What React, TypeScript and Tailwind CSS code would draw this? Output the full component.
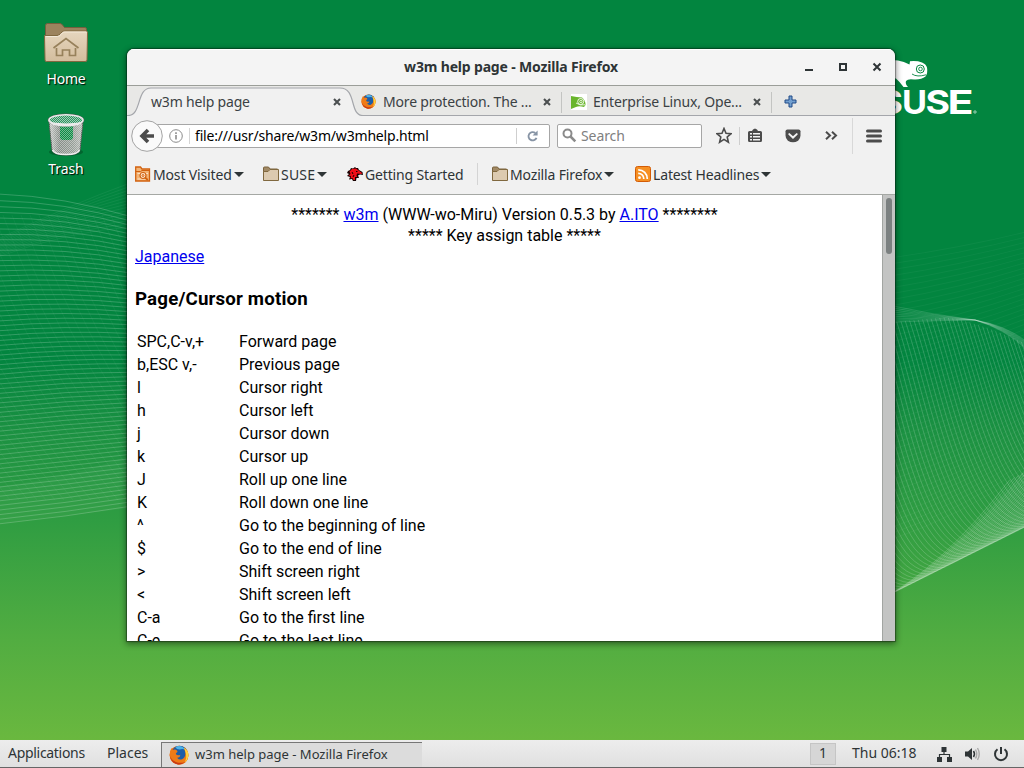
import React from "react";

const ui = "font-['Noto_Sans',sans-serif]";

const keys: [string, string][] = [
  ["SPC,C-v,+", "Forward page"],
  ["b,ESC v,-", "Previous page"],
  ["l", "Cursor right"],
  ["h", "Cursor left"],
  ["j", "Cursor down"],
  ["k", "Cursor up"],
  ["J", "Roll up one line"],
  ["K", "Roll down one line"],
  ["^", "Go to the beginning of line"],
  ["$", "Go to the end of line"],
  [">", "Shift screen right"],
  ["<", "Shift screen left"],
  ["C-a", "Go to the first line"],
  ["C-e", "Go to the last line"],
];

function Wallpaper() {
  const left = Array.from({ length: 68 }, (_, i) => {
    const t = i / 67;
    const y0 = 194 + 330 * Math.pow(t, 0.93);
    const y1 = 217 + 289 * t;
    const cy = (y0 + y1) / 2 - 9 * (1 - t) + 2 * t;
    return `M-2 ${y0.toFixed(1)}Q65 ${cy.toFixed(1)} 132 ${y1.toFixed(1)}`;
  });
  const cross = Array.from({ length: 30 }, (_, i) => `M${-150 + i * 9} 215Q${-90 + i * 9} 380 ${10 + i * 9} 500`);
  const fan = Array.from({ length: 14 }, (_, i) => `M0 ${238 + i * 1.4}Q70 ${205 + i * 2} 130 ${183 + i * 3.4}`);
  const faint = Array.from({ length: 48 }, (_, i) => `M890 ${258 + i * 6}Q960 ${248 + i * 5.7} 1026 ${232 + i * 5.1}`);
  const mesh = Array.from({ length: 64 }, (_, i) => {
    const sx = 772 + i * 4.3;
    const sy = sx < 945 ? 322 - (sx - 895) * 0.09 : 317.5 + Math.pow((sx - 945) / 80, 1.4) * 26;
    const bx = sx + 108;
    const by = 592 - (bx - 895) * 0.5;
    return `M${sx.toFixed(1)} ${sy.toFixed(1)}C${(sx + 28).toFixed(1)} ${(sy + 85).toFixed(1)} ${(bx - 60).toFixed(1)} ${(by + 8).toFixed(1)} ${bx.toFixed(1)} ${by.toFixed(1)}Q${(bx + 60).toFixed(1)} ${(by - 30).toFixed(1)} ${(bx + 130).toFixed(1)} ${(by - 120).toFixed(1)}`;
  });
  const ribbon = Array.from({ length: 9 }, (_, i) => `M893 ${306 + i * 2}Q935 ${315 + i * 0.7} 975 ${320}Q1005 ${325 + i * 0.5} 1026 ${341 + i}`);
  return (
    <svg className="absolute inset-0" width="1024" height="768" fill="none" stroke="#fff">
      <g strokeWidth="0.9" strokeOpacity="0.22">{left.map((d) => <path key={d} d={d} />)}</g>
      <g strokeWidth="0.6" strokeOpacity="0.07">{cross.map((d) => <path key={d} d={d} />)}</g>
      <g strokeWidth="0.8" strokeOpacity="0.07">{fan.map((d) => <path key={d} d={d} />)}</g>
      <path d="M0 486Q70 478 130 455V508L0 524Z" fill="#fff" fillOpacity="0.03" stroke="none" />
      <g strokeWidth="0.7" strokeOpacity="0.06">{faint.map((d) => <path key={d} d={d} />)}</g>
      <g strokeWidth="0.8" strokeOpacity="0.22">{mesh.map((d) => <path key={d} d={d} />)}</g>
      <path d="M1026 468Q970 540 895 592L1026 527Z" fill="#fff" fillOpacity="0.06" stroke="none" />
      <g strokeWidth="0.7" strokeOpacity="0.18">{ribbon.map((d) => <path key={d} d={d} />)}</g>
    </svg>
  );
}

function SuseLogo() {
  return (
    <svg className="absolute left-[870px] top-[54px]" width="112" height="66" viewBox="870 54 112 66">
      <path
        fill="#fff"
        d="M870 66Q886 58 898 60.500Q904 61.500 909.500 64.500L910 61.200Q917 60.500 922 62.500Q926 64 927 67.500Q928 73 925.500 76.500Q921 80 914 79.500Q908 78.500 906 81Q905 84 908 87H903.500Q899 81 895.500 78L893 86H870Z"
      />
      <circle cx="920.300" cy="69" r="4" fill="none" stroke="#04853f" />
      <circle cx="920.500" cy="69" r="1.800" fill="none" stroke="#04853f" strokeWidth="0.900" />
      <path d="M912 74Q917 77.500 926 74.800" fill="none" stroke="#04853f" strokeWidth="0.900" />
      <g fill="#fff" className="font-[Inter,sans-serif] text-[33px] font-bold">
        <text x="878" y="114" textLength="25" lengthAdjust="spacingAndGlyphs">S</text>
        <text x="902" y="114" textLength="25" lengthAdjust="spacingAndGlyphs">U</text>
        <text x="925.500" y="114" textLength="24.500" lengthAdjust="spacingAndGlyphs">S</text>
        <text x="947.500" y="114" textLength="26" lengthAdjust="spacingAndGlyphs">E</text>
      </g>
      <circle cx="975" cy="112" r="1.200" fill="none" stroke="#fff" strokeWidth="0.600" />
    </svg>
  );
}

function HomeIcon() {
  return (
    <svg width="46" height="42" viewBox="0 0 46 42">
      <defs>
        <linearGradient id="hf" x2="0" y2="1">
          <stop stopColor="#e6d6be" />
          <stop offset="1" stopColor="#d3bd9d" />
        </linearGradient>
      </defs>
      <path d="M2.500 39V3.500Q2.500 1.500 4.500 1.500H17Q18.500 1.500 19.500 3L21.500 5.500H42Q43.500 5.500 43.500 7V39Z" fill="#9c835e" stroke="#755f3e" />
      <path d="M1.500 13.500H14Q16 13.500 17.500 11.500L19 10Q20 9 22 9H43Q44.500 9 44.500 10.500L44 38Q44 39.500 42 39.500H3.500Q2 39.500 2 38Z" fill="url(#hf)" stroke="#80683f" />
      <path d="M2.800 14.500H14.500Q17 14.200 18.500 12L20.500 10H43.500" fill="none" stroke="#f3e9d9" />
      <path d="M10.500 26L23 16.500L35.500 26M13.500 26V33.500H19.500V28H26.500V33.500H32.500V26" fill="none" stroke="#97815b" strokeWidth="1.700" />
    </svg>
  );
}

function TrashIcon() {
  return (
    <svg width="40" height="46" viewBox="0 0 40 46">
      <defs>
        <linearGradient id="tb">
          <stop stopColor="#c9cbc8" />
          <stop offset="0.300" stopColor="#858c86" />
          <stop offset="0.700" stopColor="#949c95" />
          <stop offset="1" stopColor="#b9bcb8" />
        </linearGradient>
        <pattern id="tm" width="2" height="2" patternUnits="userSpaceOnUse">
          <rect width="1" height="1" fill="#fff" fillOpacity="0.550" />
          <rect x="1" y="1" width="1" height="1" fill="#fff" fillOpacity="0.550" />
        </pattern>
      </defs>
      <ellipse cx="20" cy="40" rx="17" ry="4" fill="#023d1c" fillOpacity="0.450" />
      <path d="M3 9L6 38Q7 43 20 43T34 38L37 9Z" fill="url(#tb)" stroke="#5b5e5b" />
      <path d="M14 12H27V25Q27 28 24 28H17Q14 28 14 25Z" fill="#0d8a45" />
      <path d="M3 9L6 38Q7 43 20 43T34 38L37 9Z" fill="url(#tm)" fillOpacity="0.750" />
      <ellipse cx="20" cy="8" rx="18" ry="6" fill="#2d9460" stroke="#555" strokeWidth="1" />
      <ellipse cx="20" cy="8" rx="17" ry="5.500" fill="url(#tm)" />
      <path d="M2 8Q4 14.500 20 14.500T38 8Q37 11 20 11.500Q4 11 2 8Z" fill="#eee" />
      <ellipse cx="20" cy="8" rx="17" ry="5.300" fill="none" stroke="#e9e9e9" strokeWidth="1.600" />
      <path d="M6.500 38Q8 42.500 20 42.500T33.500 38" fill="none" stroke="#eee" strokeWidth="1.500" />
    </svg>
  );
}

function Firefox({ size }: { size: number }) {
  return (
    <svg width={size} height={size} viewBox="0 0 16 16" className="shrink-0">
      <circle cx="8" cy="8" r="7.500" fill="#e66000" />
      <circle cx="8.500" cy="6.600" r="6.100" fill="#1c5da8" />
      <path d="M5 1.500Q10-.5 13.500 4Q11 2.500 8.500 3.500Q6 3.500 5 1.500Z" fill="#4cb3e8" />
      <path d="M12 2Q16 5 15.500 9Q14.500 15.500 8 15.700Q1 15 .5 8Q.5 4.500 2 2.300L3 4Q5 3 6.500 4.500Q7.500 5.500 5.500 6.500Q5.300 8 6.500 8Q8 8.500 9 7.800Q9 10 6.500 10.200Q8 12.300 10.500 11.400Q13.500 9.500 13 6Z" fill="#ef7b17" />
      <path d="M12 2Q16 5 15.500 9Q15 12 12.500 14Q14.500 10 13.300 6Z" fill="#ffd23b" />
      <path d="M.6 8Q1.500 12 5.500 13.500Q9 15 13 13.500Q10 16 7 15.600Q1.500 14.500.6 8Z" fill="#c83a16" />
    </svg>
  );
}

function Folder() {
  return (
    <svg width="16" height="16" viewBox="0 0 16 16" className="shrink-0">
      <path d="M.5 14V2Q.5 1 1.500 1H5.500L7 3H14.500V14Z" fill="#a28a66" stroke="#7a623d" />
      <path d="M.5 5.500H5L7 3.500H15.500V14.500H.5Z" fill="#dccab0" stroke="#80683f" />
    </svg>
  );
}

function MostVisited() {
  return (
    <svg width="16" height="16" viewBox="0 0 16 16" className="shrink-0" fill="none" stroke="#d2620f">
      <path d="M.7 14.500V1H5.500L7 3H14.500V15H.7Z" fill="#f3b577" strokeWidth="1.300" />
      <path d="M.7 5.500H5.500L7 4.500H14.500" />
      <path d="M2.500 7.500H13M2.500 13H12" stroke="#fbe0c4" />
      <circle cx="8" cy="9.500" r="3" fill="#fde9d5" strokeWidth="1.200" />
      <circle cx="8" cy="9.500" r="1" />
      <path d="M10 11.500L12.800 14" strokeWidth="1.700" />
    </svg>
  );
}

function RedHead() {
  return (
    <svg width="17" height="15" viewBox="0 0 17 15" className="shrink-0">
      <path d="M1 4L3 3L4 1L6 1.500L8 0L9 1L11 1L12 3L15.500 5L16 8L13 7.500L11 8.500L12 11L9.500 11L9 14L6 14L5 12L2 12.500L3 10L0 9L2 7L0 6Z" fill="#180000" />
      <path d="M2.500 4.500L5 2L9 1.500L11 3L15 6L14.500 7L10 6.500L9.500 9L10.500 10L8 10L8 13L6.500 13L5.500 11L3.500 11.500L4 9L1.500 8.500L3.500 7Z" fill="#f00d16" />
      <path d="M9 4.500H10.500M5 5L6 7M7 8L6 10" stroke="#180000" />
    </svg>
  );
}

function Rss() {
  return (
    <svg width="16" height="16" viewBox="0 0 16 16" className="shrink-0">
      <rect x=".5" y=".5" width="15" height="15" rx="2" fill="#f69023" stroke="#d35c06" />
      <circle cx="4.500" cy="11.700" r="1.400" fill="#fff" />
      <path d="M3.200 7.300A5.500 5.500 0 0 1 8.800 13M3.200 3.800A9 9 0 0 1 12.300 13" fill="none" stroke="#fff" strokeWidth="1.700" />
    </svg>
  );
}

function SuseFavicon() {
  return (
    <svg width="16" height="16" viewBox="0 0 16 16" className="shrink-0">
      <path d="M0 0H16V16H0Z" fill="#fff" />
      <path d="M0 2Q6 3 11 3.500Q14.500 6 14.500 11L13 13Q8 11.500 5 13L0 15Z" fill="#69b52c" />
      <circle cx="9.700" cy="7.500" r="3" fill="none" stroke="#fff" strokeWidth=".9" />
      <circle cx="9.900" cy="7.500" r="1.200" fill="none" stroke="#fff" strokeWidth=".8" />
      <path d="M5 9Q9 12 14 10.800" fill="none" stroke="#fff" strokeWidth=".8" />
    </svg>
  );
}

function CloseX() {
  return (
    <svg width="8" height="8" viewBox="0 0 8 8" className="shrink-0">
      <path d="M1 1L7 7M7 1L1 7" stroke="#4b4f50" strokeWidth="2.100" />
    </svg>
  );
}

function Caret() {
  return (
    <svg width="10" height="5" viewBox="0 0 10 5" className="shrink-0">
      <path d="M0 0H10L5 5Z" fill="#2e3436" />
    </svg>
  );
}

function TitleBar() {
  return (
    <div className="relative flex h-[36px] items-center justify-center border-t border-white bg-[#f4f4f4] pb-[2px] text-[14px] font-bold text-[#2e3436]">
      <span className="whitespace-nowrap tracking-[-0.17px]">w3m help page - Mozilla Firefox</span>
      <svg className="absolute right-[12px] top-[11px]" width="80" height="12" viewBox="0 0 80 12" fill="none" stroke="#2e3436">
        <path d="M2 9H10" strokeWidth="2" />
        <rect x="37" y="3" width="6" height="6" strokeWidth="2" />
        <path d="M70.500 2.500L77.500 9.500M77.500 2.500L70.500 9.500" strokeWidth="2" />
      </svg>
    </div>
  );
}

function TabBar() {
  return (
    <div className="relative h-[31px] border-t border-[#9b9e99] bg-[#e8e8e6]">
      <svg className="absolute left-0 top-0" width="768" height="30" viewBox="0 0 768 30">
        <path d="M0 29.500H1C15 29.500 9 2 24 2H213C230 2 222 29.500 236 29.500H768V31H0Z" fill="#f1f1f1" />
        <path d="M0 29.500H1C15 29.500 9 2 24 2H213C230 2 222 29.500 236 29.500H768" fill="none" stroke="#a4a6ab" strokeWidth="1.200" />
        <path d="M434.500 6V27M644.500 6V27" stroke="#c3c4c2" />
      </svg>
      <div className="relative flex h-[31px] items-center text-[14px] tracking-[-0.18px] text-[#3b4144]">
        <span className="ml-[24px] w-[182px] whitespace-nowrap">w3m help page</span>
        <CloseX />
        <span className="ml-[20px] flex"><Firefox size={15} /></span>
        <span className="ml-[7px] w-[160px] whitespace-nowrap">More protection. The ...</span>
        <CloseX />
        <span className="ml-[20px] flex"><SuseFavicon /></span>
        <span className="ml-[6px] w-[160px] whitespace-nowrap">Enterprise Linux, Ope...</span>
        <CloseX />
        <svg className="ml-[23px]" width="13" height="13" viewBox="0 0 13 13">
          <path d="M5 1H8V5H12V8H8V12H5V8H1V5H5Z" fill="#729fcf" stroke="#204a87" />
        </svg>
      </div>
    </div>
  );
}

function NavBar() {
  return (
    <div className="flex h-[39px] items-center text-[14px]">
      <svg className="relative z-10 ml-[4px] shrink-0" width="32" height="32" viewBox="0 0 32 32">
        <circle cx="16" cy="16" r="15.300" fill="#fafafa" stroke="#a3a3a3" />
        <path d="M17 10L11 16L17 22M11 16H23" fill="none" stroke="#4c4c4c" strokeWidth="3.600" />
      </svg>
      <div className="-ml-[6px] flex h-[24px] w-[393px] shrink-0 items-center rounded-r-[2px] border border-[#a6a6a6] bg-white">
        <svg className="ml-[11px] shrink-0" width="14" height="14" viewBox="0 0 14 14" fill="none" stroke="#8b8b8b">
          <circle cx="7" cy="7" r="6.300" />
          <path d="M7 6V10.500M7 3.300V5" strokeWidth="1.600" />
        </svg>
        <span className="ml-[6px] h-[16px] w-px bg-[#d5d5d5]" />
        <span className="ml-[5px] w-[321px] whitespace-nowrap tracking-[-0.18px] text-black">file:///usr/share/w3m/w3mhelp.html</span>
        <span className="h-[16px] w-px bg-[#cfcfcf]" />
        <svg className="ml-[10px] shrink-0" width="12" height="12" viewBox="0 0 13 13">
          <path d="M9 3.300A4.500 4.500 0 1 0 10.300 8.500" fill="none" stroke="#8794a5" strokeWidth="2" />
          <path d="M11.500.5V6H6Z" fill="#8794a5" />
        </svg>
      </div>
      <div className="ml-[7px] flex h-[24px] w-[145px] shrink-0 items-center rounded-[2px] border border-[#a6a6a6] bg-white text-[#808080]">
        <svg className="ml-[4px]" width="15" height="15" viewBox="0 0 15 15" fill="none" stroke="#8b8b8b">
          <circle cx="5.500" cy="5.500" r="4" strokeWidth="2" />
          <path d="M8.500 8.500L13.300 13.300" strokeWidth="2.500" />
        </svg>
        <span className="ml-[4px] tracking-[-0.1px]">Search</span>
      </div>
      <svg className="ml-[14px] shrink-0" width="16" height="17" viewBox="0 0 16 17">
        <path d="M8 1.500L10 6.300L15 6.700L11.200 10L12.400 15.200L8 12.400L3.600 15.200L4.800 10L1 6.700L6 6.300Z" fill="none" stroke="#4c4c4c" strokeWidth="1.600" />
      </svg>
      <span className="ml-[7px] h-[18px] w-px bg-[#cecece]" />
      <svg className="ml-[8px] shrink-0" width="14" height="15" viewBox="0 0 14 15">
        <path d="M4 3Q4.500 1 7 .5Q9.500 1 10 3H12.500Q14 3 14 4.500V12.500Q14 14 12.500 14H1.500Q0 14 0 12.500V4.500Q0 3 1.500 3Z" fill="#4c4c4c" />
        <path d="M2 5H4V6.500H2ZM5 5H12V6.500H5ZM2 8H4V9.500H2ZM5 8H12V9.500H5ZM2 11H4V12.500H2ZM5 11H12V12.500H5Z" fill="#f4f4f4" />
      </svg>
      <svg className="ml-[23px] shrink-0" width="16" height="14" viewBox="0 0 17 15">
        <path d="M2.500.5H14.500Q16.500.5 16.500 2.500V7Q16.500 10.500 14 12.500Q8.500 16 3 12.500Q.5 10.500.5 7V2.500Q.5.5 2.500.5Z" fill="#4c4c4c" />
        <path d="M4.500 5.500L8.500 9.200L12.500 5.500" fill="none" stroke="#f4f4f4" strokeWidth="2.100" strokeLinecap="round" />
      </svg>
      <svg className="ml-[24px] shrink-0" width="13" height="9" viewBox="0 0 13 9" fill="none" stroke="#4c4c4c" strokeWidth="2">
        <path d="M1 .8L5 4.500L1 8.200M7 .8L11 4.500L7 8.200" />
      </svg>
      <span className="ml-[14px] h-[36px] w-px bg-[#d8d8d8]" />
      <svg className="ml-[13px] shrink-0" width="16" height="14" viewBox="0 0 16 14">
        <path d="M1.500 2H14.500M1.500 7H14.500M1.500 12H14.500" stroke="#4c4c4c" strokeWidth="3" strokeLinecap="round" />
      </svg>
    </div>
  );
}

function Bookmarks() {
  return (
    <div className="flex h-[40px] items-center whitespace-nowrap border-b border-[#a5a8a4] pb-px text-[14px] tracking-[-0.15px] text-[#2e3436]">
      <div className="ml-[8px] flex w-[128px] items-center gap-[2px]"><MostVisited /><span>Most Visited</span><Caret /></div>
      <div className="flex w-[84px] items-center gap-[2px]"><Folder /><span className="tracking-[0.2px]">SUSE</span><Caret /></div>
      <div className="flex w-[130px] items-center gap-[1px]"><RedHead /><span>Getting Started</span></div>
      <span className="h-[22px] w-px bg-[#d4d4d4]" />
      <div className="ml-[14px] flex w-[143px] items-center gap-[2px]"><Folder /><span>Mozilla Firefox</span><Caret /></div>
      <div className="flex items-center gap-[2px]"><Rss /><span>Latest Headlines</span><Caret /></div>
    </div>
  );
}

function Page() {
  return (
    <div className="flex h-[446px] overflow-hidden bg-white">
      <main className="w-[755px] shrink-0 px-[8px] pt-[9px] font-[Roboto,sans-serif] text-[16px] leading-[21px] text-black">
        <div className="text-center">
          ******* <a className="text-[#0000ee] underline">w3m</a> (WWW-wo-Miru) Version 0.5.3 by <a className="text-[#0000ee] underline">A.ITO</a> ********
        </div>
        <div className="text-center">***** Key assign table *****</div>
        <div><a className="text-[#0000ee] underline">Japanese</a></div>
        <h3 className="mt-[20px] text-[18.700px] font-bold leading-[24px] tracking-[0.17px]">Page/Cursor motion</h3>
        <div className="mt-[20px] grid grid-cols-[100px_1fr] gap-x-[2px] gap-y-[2px] px-[2px]">
          {keys.map(([k, v]) => (
            <React.Fragment key={k}>
              <span>{k}</span>
              <span>{v}</span>
            </React.Fragment>
          ))}
        </div>
      </main>
      <div className="flex w-[13px] justify-center border-l border-[#a2a5a2] bg-[#c3c4c3] pt-[3px]">
        <div className="h-[56px] w-[6px] rounded-full bg-[#7b8080]" />
      </div>
    </div>
  );
}

function Panel() {
  return (
    <div className="flex h-[28px] items-center whitespace-nowrap border-b border-[#666] bg-linear-to-b from-[#ededed] to-[#e0e0e0] text-[14px] text-[#2e3436]">
      <span className="ml-[8px] w-[99px] pb-[2px] tracking-[-0.3px]">Applications</span>
      <span className="w-[54px] pb-[2px]">Places</span>
      <div className="mt-[1px] flex h-[25px] w-[261px] items-center border-l border-t border-[#777] bg-[#dcdcdc] pl-[7px] text-[13px]">
        <Firefox size={20} />
        <span className="ml-[6px]">w3m help page - Mozilla Firefox</span>
      </div>
      <div className="ml-[388px] flex h-[22px] w-[26px] items-center justify-center border border-[#c5c5c5] bg-[#d6d6d6] pb-[2px]">1</div>
      <span className="ml-[16px] w-[84px] pb-[2px]">Thu 06:18</span>
      <svg className="shrink-0" width="74" height="16" viewBox="0 0 74 16">
        <path d="M5.500 1H10.500V6H5.500ZM1 11H6V16H1ZM11 11H16V16H11Z" fill="#2e3436" />
        <path d="M8 6V8.500M3.500 11V8.500H13.500V11" fill="none" stroke="#2e3436" strokeWidth="1.200" />
        <path d="M29 5.500H32L36 2V14L32 10.500H29Z" fill="#2e3436" />
        <path d="M37.500 5Q39.500 8 37.500 11" fill="none" stroke="#2e3436" strokeWidth="1.500" />
        <path d="M39.500 3.500Q42 8 39.500 12.500M41.500 2Q45 8 41.500 14" fill="none" stroke="#aaa" strokeWidth="1.400" />
        <path d="M61.500 3.300A6 6 0 1 0 68.500 3.300M65 1V8" fill="none" stroke="#2e3436" strokeWidth="2" />
      </svg>
    </div>
  );
}

export default function App() {
  return (
    <div className={`relative flex h-[768px] w-[1024px] flex-col overflow-hidden bg-[linear-gradient(180deg,#02853f_0px,#02853f_360px,#1b9142_430px,#2f9d42_520px,#52ad41_640px,#6ab83f_740px)] ${ui}`}>
      <Wallpaper />
      <SuseLogo />
      <div className="absolute left-[26px] top-[22px] flex w-[80px] flex-col items-center text-[14px] text-white [text-shadow:1px_1px_1px_#000]">
        <HomeIcon />
        <span className="mt-[5px] leading-[20px] tracking-[-0.2px]">Home</span>
      </div>
      <div className="absolute left-[26px] top-[112px] flex w-[80px] flex-col items-center text-[14px] text-white [text-shadow:1px_1px_1px_#000]">
        <TrashIcon />
        <span className="mt-[1px] leading-[20px] tracking-[-0.1px]">Trash</span>
      </div>
      <section className="absolute left-[127px] top-[49px] h-[592px] w-[768px] overflow-hidden rounded-t-[7px] bg-[#f1f1f1] shadow-[0_0_1px_1px_rgba(0,0,0,0.35),0_2px_6px_1px_rgba(0,0,0,0.45)]">
        <TitleBar />
        <TabBar />
        <NavBar />
        <Bookmarks />
        <Page />
      </section>
      <footer className="relative mt-auto"><Panel /></footer>
    </div>
  );
}
